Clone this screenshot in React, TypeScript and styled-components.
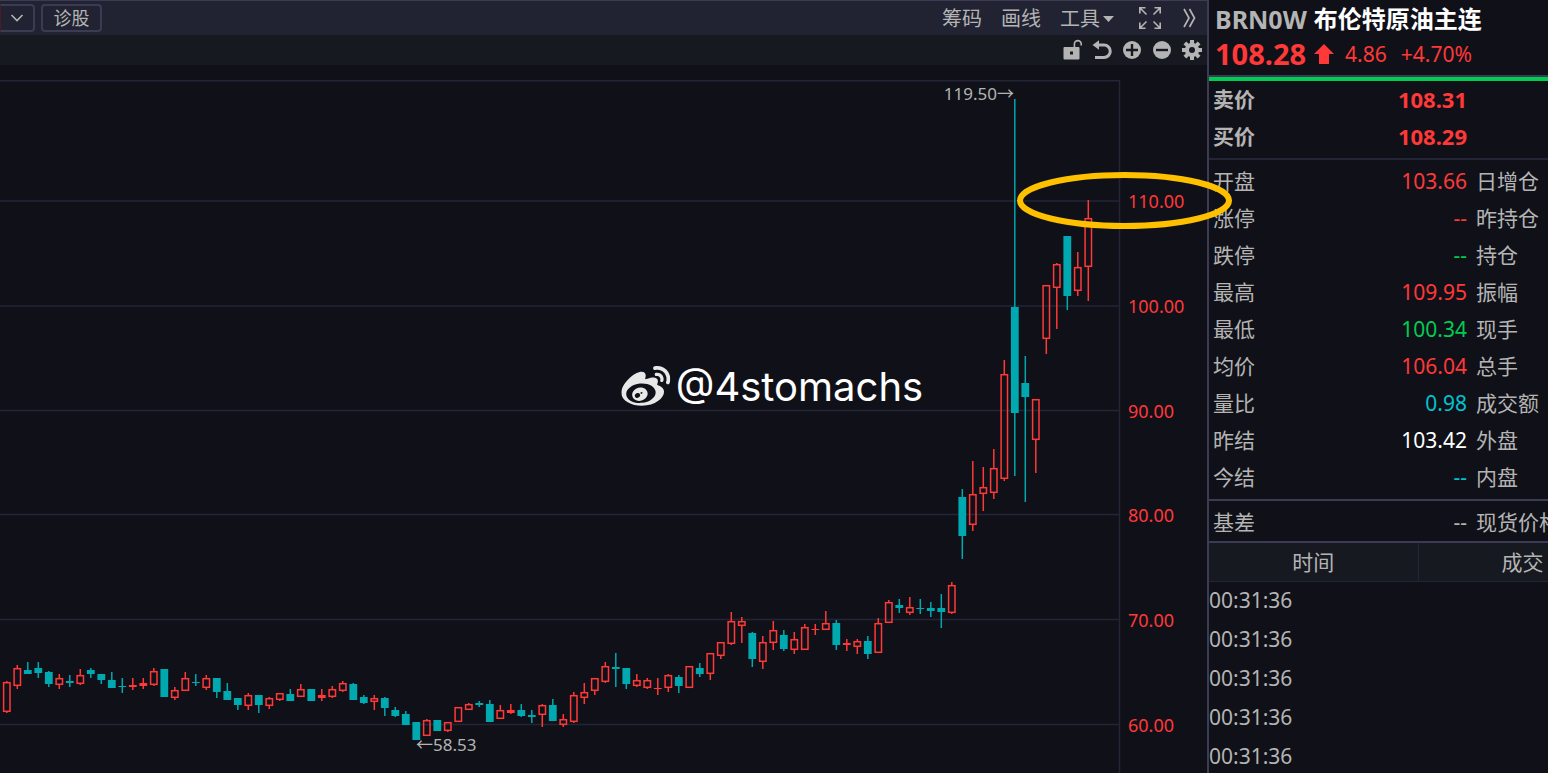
import React from "react";
import styled, { createGlobalStyle } from "styled-components";
import { FaWeibo } from "react-icons/fa";

const color = {
  bg: "#101118",
  bar: "#212332",
  subBar: "#171921",
  line: "#3b3c54",
  grid: "#232536",
  text: "#b4b4b4",
  red: "#ff3838",
  green: "#00cc52",
  cyan: "#00c3cf",
  teal: "#00a8b0",
  white: "#ffffff",
  mark: "#ffc000",
};

const fontStack = `"Noto Sans", "Noto Sans CJK SC", sans-serif`;

const GlobalStyle = createGlobalStyle`
  * { box-sizing: border-box; }
  body {
    margin: 0;
    background: ${color.bg};
    color: ${color.text};
    font-family: ${fontStack};
    overflow: hidden;
  }
  button { font: inherit; color: inherit; cursor: pointer; }
`;

const Page = styled.div`
  display: flex;
  height: 100vh;
  overflow: hidden;
`;

const ChartPane = styled.main`
  position: relative;
  z-index: 1;
  flex: 1;
  min-width: 0;
  display: flex;
  flex-direction: column;
`;

const Toolbar = styled.header`
  display: flex;
  align-items: center;
  justify-content: space-between;
  height: 35px;
  padding-right: 11px;
  background: ${color.bar};
  border-top: 1px solid ${color.line};
`;

const ToolGroup = styled.div<{ $gap: number }>`
  display: flex;
  align-items: center;
  gap: ${(p) => p.$gap}px;
`;

const BoxButton = styled.button<{ $open?: boolean }>`
  display: flex;
  align-items: center;
  justify-content: center;
  height: 28px;
  width: ${(p) => (p.$open ? 35 : 61)}px;
  padding: 0;
  background: transparent;
  border: 2px solid ${color.line};
  border-left: ${(p) => (p.$open ? "1px solid #4a1c2a" : `2px solid ${color.line}`)};
  border-radius: ${(p) => (p.$open ? "0 4px 4px 0" : "4px")};
  font-size: 18px;
  line-height: 24px;
`;

const TextButton = styled.button`
  display: flex;
  align-items: center;
  gap: 3px;
  padding: 2px 0 0;
  background: transparent;
  border: 0;
  font-size: 20px;
  line-height: 32px;
`;

const IconButton = styled.button`
  display: flex;
  padding: 0;
  background: transparent;
  border: 0;
`;

const SubBar = styled.div`
  display: flex;
  align-items: center;
  justify-content: flex-end;
  gap: 8px;
  height: 30px;
  padding-right: 4px;
  background: ${color.subBar};
`;

const ChartArea = styled.section`
  position: relative;
  flex: 1;
  min-height: 0;
`;

const ChartSvg = styled.svg`
  display: block;
  width: 100%;
  overflow: visible;
  font-family: ${fontStack};
`;

const Watermark = styled.div`
  position: absolute;
  top: 50%;
  left: 64%;
  transform: translate(-50%, -50%);
  display: flex;
  align-items: center;
  gap: 5px;
  margin-top: -32px;
  color: ${color.white};
  font-family: Inter, sans-serif;
  font-size: 40px;
  line-height: 60px;
  white-space: nowrap;
  svg { color: #e8e8e8; }
`;

const QuotePane = styled.aside`
  width: 341px;
  flex: none;
  overflow: hidden;
  border-left: 2px solid ${color.line};
`;

const QuoteHead = styled.div`
  height: 77px;
  padding: 1px 0 0 6px;
  border-bottom: 2px solid ${color.line};
`;

const Title = styled.h1`
  display: flex;
  gap: 7px;
  margin: 0;
  font-size: 25px;
  line-height: 36px;
  font-weight: 700;
  white-space: nowrap;
`;

const Name = styled.span`
  color: ${color.white};
  font-size: 24px;
`;

const PriceLine = styled.div`
  display: flex;
  align-items: center;
  color: ${color.red};
  font-size: 21px;
  line-height: 34px;
  svg { margin: 0 11px 0 8px; }
`;

const LastPrice = styled.strong`
  font-size: 29px;
`;

const Percent = styled.span`
  margin-left: 14px;
`;

const Block = styled.div<{ $top?: string; $pad: string; $line: string }>`
  padding: ${(p) => p.$pad};
  border-top: ${(p) => p.$top ?? "0"};
  border-bottom: 2px solid ${(p) => p.$line};
`;

const QuoteTable = styled.table`
  table-layout: fixed;
  width: 420px;
  border-collapse: collapse;
  font-size: 21px;
  line-height: 36px;
`;

const Label = styled.th<{ $bold?: boolean; $w: number }>`
  width: ${(p) => p.$w}px;
  height: 37px;
  padding: 0 0 1px 4px;
  text-align: left;
  font-weight: ${(p) => (p.$bold ? 700 : 400)};
  white-space: nowrap;
`;

const Value = styled.td<{ $color: string; $bold?: boolean }>`
  width: 159px;
  height: 37px;
  padding: 0 5px 1px 0;
  text-align: right;
  color: ${(p) => p.$color};
  font-size: ${(p) => (p.$bold ? 22 : 21)}px;
  font-weight: ${(p) => (p.$bold ? 700 : 400)};
`;

const TickTable = styled.table`
  table-layout: fixed;
  width: 418px;
  border-collapse: collapse;
  font-size: 21px;
  line-height: 36px;
`;

const TickHead = styled.th`
  width: 209px;
  height: 38px;
  padding: 0;
  background: ${color.subBar};
  border-right: 1px solid ${color.grid};
  border-bottom: 1px solid ${color.grid};
  font-weight: 400;
`;

const TickCell = styled.td`
  height: 39px;
  padding: 0 0 1px;
`;

/* [direction, high, body top, body bottom, low] in chart units */
type Candle = ["u" | "d", number, number, number, number];

const candles: Candle[] = [
  ["u", 681, 682, 712, 713], ["u", 665, 668, 686, 689], ["d", 662, 670, 674, 674],
  ["d", 662, 668, 673, 678], ["d", 671, 672, 684, 687], ["u", 674, 678, 685, 689],
  ["d", 675, 681, 683, 687], ["u", 669, 675, 684, 685], ["d", 668, 670, 674, 678],
  ["d", 674, 674, 680, 684], ["d", 672, 680, 688, 688], ["d", 678, 686, 687, 693],
  ["u", 678, 685, 687, 690], ["u", 678, 683, 686, 689], ["u", 668, 671, 685, 686],
  ["d", 669, 669, 697, 697], ["u", 687, 690, 698, 700], ["u", 672, 678, 691, 691],
  ["d", 674, 682, 683, 686], ["u", 675, 678, 688, 690], ["d", 678, 678, 692, 698],
  ["d", 683, 691, 700, 700], ["d", 698, 698, 705, 710], ["u", 693, 695, 706, 710],
  ["d", 695, 695, 705, 713], ["u", 697, 698, 706, 709], ["u", 693, 693, 700, 701],
  ["d", 689, 694, 701, 701], ["u", 684, 689, 697, 697], ["d", 689, 689, 701, 701],
  ["u", 689, 695, 698, 701], ["u", 686, 689, 697, 698], ["u", 681, 683, 691, 692],
  ["d", 683, 684, 700, 700], ["d", 695, 697, 703, 704], ["u", 695, 698, 702, 710],
  ["d", 697, 698, 708, 716], ["d", 707, 710, 716, 717], ["d", 711, 714, 725, 725],
  ["d", 722, 722, 740, 740], ["u", 719, 720, 736, 736], ["d", 720, 720, 731, 731],
  ["u", 722, 722, 731, 732], ["u", 707, 707, 722, 722], ["u", 703, 704, 710, 710],
  ["d", 701, 703, 705, 707], ["d", 700, 704, 722, 722], ["u", 705, 710, 719, 719],
  ["u", 704, 710, 713, 714], ["d", 704, 710, 716, 717], ["d", 710, 715, 717, 723],
  ["u", 704, 705, 715, 727], ["d", 699, 705, 721, 721], ["u", 714, 719, 725, 727],
  ["u", 692, 695, 722, 723], ["u", 683, 692, 698, 704], ["u", 678, 678, 691, 695],
  ["u", 662, 666, 682, 683], ["d", 653, 667, 669, 687], ["d", 668, 668, 684, 689],
  ["u", 674, 680, 686, 687], ["u", 678, 680, 688, 689], ["u", 678, 688, 689, 695],
  ["u", 674, 675, 688, 692], ["d", 675, 677, 686, 693], ["u", 666, 666, 688, 688],
  ["d", 663, 668, 674, 677], ["u", 653, 653, 674, 680], ["u", 642, 642, 656, 659],
  ["u", 612, 621, 644, 645], ["u", 617, 621, 626, 643], ["d", 632, 633, 659, 667],
  ["u", 636, 642, 662, 669], ["u", 621, 630, 643, 650], ["d", 630, 635, 649, 651],
  ["u", 632, 639, 650, 654], ["u", 624, 627, 650, 650], ["u", 624, 629, 630, 635],
  ["u", 611, 623, 630, 630], ["d", 620, 623, 645, 650], ["u", 639, 643, 645, 651],
  ["u", 639, 641, 647, 654], ["d", 636, 641, 654, 659], ["u", 618, 623, 653, 653],
  ["u", 600, 602, 623, 623], ["d", 599, 605, 608, 613], ["u", 597, 607, 613, 615],
  ["d", 599, 608, 609, 614], ["d", 602, 608, 611, 617], ["d", 594, 608, 612, 628],
  ["u", 582, 585, 613, 614], ["d", 489, 497, 536, 559], ["u", 461, 494, 525, 531],
  ["u", 467, 487, 494, 511], ["u", 449, 468, 493, 499], ["u", 360, 374, 479, 481],
  ["d", 99, 307, 413, 476], ["d", 356, 383, 397, 502], ["u", 399, 399, 440, 473],
  ["u", 285, 285, 339, 354], ["u", 263, 264, 288, 329], ["d", 236, 236, 296, 310],
  ["u", 252, 267, 291, 296], ["u", 200, 218, 267, 301],
];

const gridLines = [
  { y: 201, label: "110.00" },
  { y: 306, label: "100.00" },
  { y: 410.5, label: "90.00" },
  { y: 514.5, label: "80.00" },
  { y: 619.5, label: "70.00" },
  { y: 724.5, label: "60.00" },
];

function CandleMark({ data, index }: { data: Candle; index: number }) {
  const [dir, high, top, bottom, low] = data;
  const x = 6.8 + 10.5 * index;
  const c = dir === "u" ? color.red : color.teal;
  const hollow = dir === "u" && bottom - top > 3;
  return (
    <g stroke={c} strokeWidth={1.5}>
      {hollow ? (
        <>
          <path d={`M${x} ${high}V${top}M${x} ${bottom}V${low}`} />
          <rect x={x - 3.2} y={top + 0.7} width={6.4} height={bottom - top - 1.4} fill="none" />
        </>
      ) : (
        <>
          <path d={`M${x} ${high}V${low}`} />
          <rect x={x - 3.9} y={top} width={7.8} height={bottom - top} fill={c} stroke="none" />
        </>
      )}
    </g>
  );
}

function Chart() {
  return (
    <ChartSvg viewBox="0 65 1207 708" role="img" aria-label="K线图">
      <g stroke={color.grid} strokeWidth={1.5}>
        <path d="M0 80.7H1119.5V773" fill="none" />
        {gridLines.map((g) => (
          <path key={g.label} d={`M0 ${g.y}H1119`} />
        ))}
      </g>
      {candles.map((c, i) => (
        <CandleMark key={i} data={c} index={i} />
      ))}
      <g fill={color.red} fontSize={18}>
        {gridLines.map((g) => (
          <text key={g.label} x={1128} y={g.y + 7}>{g.label}</text>
        ))}
      </g>
      <g fill={color.text} fontSize={17}>
        <text x={1014} y={100} textAnchor="end">119.50→</text>
        <text x={416} y={751}>←58.53</text>
      </g>
      <ellipse cx={1124.5} cy={200.5} rx={104.5} ry={25.5} fill="none" stroke={color.mark} strokeWidth={6} />
    </ChartSvg>
  );
}

const ChevronIcon = () => (
  <svg width="14" height="10" viewBox="0 0 14 10" fill="none" stroke={color.text} strokeWidth="1.6">
    <path d="M1.5 2L7 7.5L12.5 2" />
  </svg>
);

const CaretIcon = () => (
  <svg width="11" height="8" viewBox="0 0 11 8" fill={color.text}>
    <path d="M0 1H11L5.5 7Z" />
  </svg>
);

const ExpandIcon = () => (
  <svg width="22" height="22" viewBox="0 0 22 22" fill="none" stroke={color.text} strokeWidth="1.6">
    <path d="M0.8 6.5V0.8H6.5M0.8 0.8L7.5 7.5M15.5 0.8H21.2V6.5M21.2 0.8L14.5 7.5M21.2 15.5V21.2H15.5M21.2 21.2L14.5 14.5M6.5 21.2H0.8V15.5M0.8 21.2L7.5 14.5" />
  </svg>
);

const MoreIcon = () => (
  <svg width="13" height="20" viewBox="0 0 13 20" fill="none" stroke={color.text} strokeWidth="1.7">
    <path d="M1 1L6 10L1 19M6.5 1L11.5 10L6.5 19" />
  </svg>
);

const UnlockIcon = () => (
  <svg width="22" height="22" viewBox="0 0 22 22" fill="none">
    <path fillRule="evenodd" fill={color.text} d="M3.5 8H17.5Q18.5 8 18.5 9V19.5Q18.5 20.5 17.5 20.5H3.5Q2.5 20.5 2.5 19.5V9Q2.5 8 3.5 8ZM9 12.5V15.5H12V12.5Z" />
    <path d="M13.4 8.5V5A3.4 3.4 0 0 1 20.2 5V6.5" stroke={color.text} strokeWidth="1.6" />
  </svg>
);

const UndoIcon = () => (
  <svg width="22" height="22" viewBox="0 0 22 22" fill="none">
    <path d="M6 6H13A6 6 0 0 1 13 18.5H4" stroke={color.text} strokeWidth="3" />
    <path d="M1.5 6L8 1.2V10.8Z" fill={color.text} />
  </svg>
);

const RoundIcon = ({ plus }: { plus?: boolean }) => (
  <svg width="22" height="22" viewBox="0 0 22 22">
    <circle cx="11" cy="11" r="9" fill={color.text} />
    <path d={plus ? "M5 11H17M11 5V17" : "M5 11H17"} stroke={color.subBar} strokeWidth="2.4" />
  </svg>
);

const GearIcon = () => (
  <svg width="22" height="22" viewBox="0 0 22 22" fill={color.text}>
    {[0, 45, 90, 135].map((a) => (
      <rect key={a} x="9" y="1" width="4" height="20" transform={`rotate(${a} 11 11)`} />
    ))}
    <circle cx="11" cy="11" r="7.2" />
    <circle cx="11" cy="11" r="3" fill={color.subBar} />
  </svg>
);

const UpArrow = () => (
  <svg width="20" height="20" viewBox="0 0 20 20" fill={color.red}>
    <path d="M10 0L20 10H15V20H5V10H0Z" />
  </svg>
);

const quotes: [string, string, string, string][] = [
  ["开盘", "103.66", color.red, "日增仓"],
  ["涨停", "--", color.red, "昨持仓"],
  ["跌停", "--", color.green, "持仓"],
  ["最高", "109.95", color.red, "振幅"],
  ["最低", "100.34", color.green, "现手"],
  ["均价", "106.04", color.red, "总手"],
  ["量比", "0.98", color.cyan, "成交额"],
  ["昨结", "103.42", color.white, "外盘"],
  ["今结", "--", color.cyan, "内盘"],
];

const bids: [string, string][] = [
  ["卖价", "108.31"],
  ["买价", "108.29"],
];

const ticks = ["00:31:36", "00:31:36", "00:31:36", "00:31:36", "00:31:36"];

function QuoteRow({ row }: { row: [string, string, string, string] }) {
  const [label, value, c, next] = row;
  return (
    <tr>
      <Label scope="row" $w={104}>{label}</Label>
      <Value $color={c}>{value}</Value>
      <Label scope="row" $w={157}>{next}</Label>
    </tr>
  );
}

export default function App() {
  return (
    <Page>
      <GlobalStyle />
      <ChartPane>
        <Toolbar>
          <ToolGroup $gap={6}>
            <BoxButton $open aria-label="展开"><ChevronIcon /></BoxButton>
            <BoxButton>诊股</BoxButton>
          </ToolGroup>
          <ToolGroup $gap={25}>
            <ToolGroup $gap={19}>
              <TextButton>筹码</TextButton>
              <TextButton>画线</TextButton>
              <TextButton>工具<CaretIcon /></TextButton>
            </ToolGroup>
            <ToolGroup $gap={22}>
              <IconButton aria-label="全屏"><ExpandIcon /></IconButton>
              <IconButton aria-label="更多"><MoreIcon /></IconButton>
            </ToolGroup>
          </ToolGroup>
        </Toolbar>
        <SubBar>
          <IconButton aria-label="解锁"><UnlockIcon /></IconButton>
          <IconButton aria-label="撤销"><UndoIcon /></IconButton>
          <IconButton aria-label="放大"><RoundIcon plus /></IconButton>
          <IconButton aria-label="缩小"><RoundIcon /></IconButton>
          <IconButton aria-label="设置"><GearIcon /></IconButton>
        </SubBar>
        <ChartArea>
          <Chart />
          <Watermark>
            <FaWeibo size={49} />
            @4stomachs
          </Watermark>
        </ChartArea>
      </ChartPane>
      <QuotePane>
        <QuoteHead>
          <Title>BRN0W<Name>布伦特原油主连</Name></Title>
          <PriceLine>
            <LastPrice>108.28</LastPrice>
            <UpArrow />
            <span>4.86</span>
            <Percent>+4.70%</Percent>
          </PriceLine>
        </QuoteHead>
        <Block $top={`4px solid ${color.green}`} $pad="0 0 3px" $line={color.grid}>
          <QuoteTable>
            <tbody>
              {bids.map(([label, value]) => (
                <tr key={label}>
                  <Label scope="row" $w={104} $bold>{label}</Label>
                  <Value $color={color.red} $bold>{value}</Value>
                  <td />
                </tr>
              ))}
            </tbody>
          </QuoteTable>
        </Block>
        <Block $pad="3px 0" $line={color.line}>
          <QuoteTable>
            <tbody>
              {quotes.map((q) => <QuoteRow key={q[0]} row={q} />)}
            </tbody>
          </QuoteTable>
        </Block>
        <Block $pad="3px 0 0" $line={color.line}>
          <QuoteTable>
            <tbody>
              <QuoteRow row={["基差", "--", color.text, "现货价格"]} />
            </tbody>
          </QuoteTable>
        </Block>
        <TickTable>
          <thead>
            <tr>
              <TickHead scope="col">时间</TickHead>
              <TickHead scope="col">成交</TickHead>
            </tr>
          </thead>
          <tbody>
            {ticks.map((t, i) => (
              <tr key={i}>
                <TickCell>{t}</TickCell>
                <TickCell />
              </tr>
            ))}
          </tbody>
        </TickTable>
      </QuotePane>
    </Page>
  );
}
